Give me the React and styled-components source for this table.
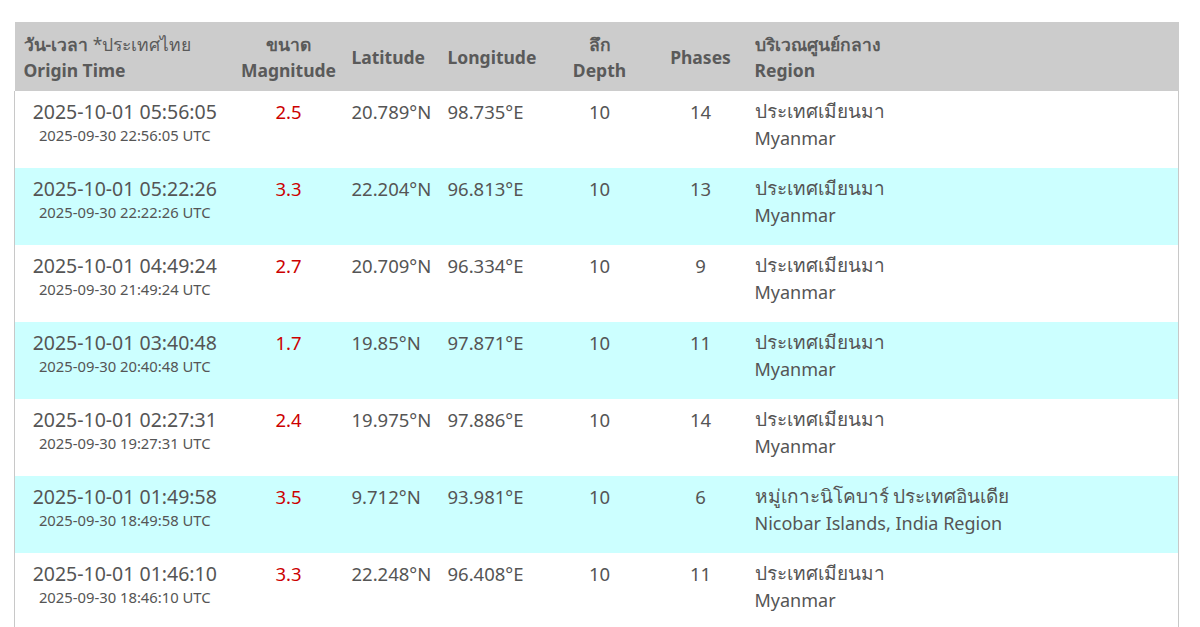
import React from "react";
import styled, { createGlobalStyle } from "styled-components";

const Global = createGlobalStyle`
  html, body { margin: 0; padding: 0; background: #fff; }
  body { font-family: "Noto Sans", "Open Sans", sans-serif; color: #555; }
`;

const Page = styled.div`
  padding: 22px 21px 0 14px;
`;

const Table = styled.table`
  width: 1165px;
  border-collapse: collapse;
  table-layout: fixed;
`;

const HeadRow = styled.tr`
  background: #cccccc;
  height: 69px;
`;

const Th = styled.th`
  font-weight: 700;
  font-size: 17.5px;
  line-height: 26px;
  color: #5a5a5a;
  text-align: ${(p) => p.$align || "left"};
  padding: ${(p) => (p.$align === "center" ? "0" : `0 9px 0 ${p.$pl ?? 9}px`)};
  vertical-align: middle;
  white-space: nowrap;
`;

const Light = styled.span`
  font-weight: 400;
`;

const Row = styled.tr`
  background: ${(p) => (p.$alt ? "#ccffff" : "#ffffff")};
  height: 77px;
  border-left: 1px solid #c8c8c8;
  border-right: 1px solid #c8c8c8;
`;

const Td = styled.td`
  vertical-align: top;
  padding: 8px 9px 0;
  font-size: 18.5px;
  line-height: 26px;
  color: ${(p) => (p.$red ? "#cc0000" : "#555")};
  text-align: ${(p) => p.$align || "left"};
  white-space: nowrap;
`;

const Main = styled.div`
  font-size: 19.5px;
  line-height: 26px;
`;

const Utc = styled.div`
  font-size: 14.8px;
  line-height: 20px;
`;

const RegionCell = styled.td`
  vertical-align: top;
  padding: 7px 9px 0 4px;
  font-size: 18px;
  line-height: 27px;
  color: #555;
  white-space: nowrap;
`;

const Thai = styled.span`
  font-size: 19px;
`;

const rows = [
  ["2025-10-01 05:56:05", "2025-09-30 22:56:05 UTC", "2.5", "20.789°N", "98.735°E", "10", "14", "ประเทศเมียนมา", "Myanmar"],
  ["2025-10-01 05:22:26", "2025-09-30 22:22:26 UTC", "3.3", "22.204°N", "96.813°E", "10", "13", "ประเทศเมียนมา", "Myanmar"],
  ["2025-10-01 04:49:24", "2025-09-30 21:49:24 UTC", "2.7", "20.709°N", "96.334°E", "10", "9", "ประเทศเมียนมา", "Myanmar"],
  ["2025-10-01 03:40:48", "2025-09-30 20:40:48 UTC", "1.7", "19.85°N", "97.871°E", "10", "11", "ประเทศเมียนมา", "Myanmar"],
  ["2025-10-01 02:27:31", "2025-09-30 19:27:31 UTC", "2.4", "19.975°N", "97.886°E", "10", "14", "ประเทศเมียนมา", "Myanmar"],
  ["2025-10-01 01:49:58", "2025-09-30 18:49:58 UTC", "3.5", "9.712°N", "93.981°E", "10", "6", "หมู่เกาะนิโคบาร์ ประเทศอินเดีย", "Nicobar Islands, India Region"],
  ["2025-10-01 01:46:10", "2025-09-30 18:46:10 UTC", "3.3", "22.248°N", "96.408°E", "10", "11", "ประเทศเมียนมา", "Myanmar"],
];

export default function App() {
  return (
    <Page>
      <Global />
      <Table>
        <colgroup>
          <col style={{ width: 220 }} />
          <col style={{ width: 108 }} />
          <col style={{ width: 96 }} />
          <col style={{ width: 110 }} />
          <col style={{ width: 102 }} />
          <col style={{ width: 100 }} />
          <col />
        </colgroup>
        <thead>
          <HeadRow>
            <Th>
              วัน-เวลา <Light>*ประเทศไทย</Light>
              <br />
              Origin Time
            </Th>
            <Th $align="center">
              ขนาด
              <br />
              Magnitude
            </Th>
            <Th>Latitude</Th>
            <Th>Longitude</Th>
            <Th $align="center">
              ลึก
              <br />
              Depth
            </Th>
            <Th $align="center">Phases</Th>
            <Th $pl={4}>
              บริเวณศูนย์กลาง
              <br />
              Region
            </Th>
          </HeadRow>
        </thead>
        <tbody>
          {rows.map((r, i) => (
            <Row key={i} $alt={i % 2 === 1}>
              <Td $align="center">
                <Main>{r[0]}</Main>
                <Utc>{r[1]}</Utc>
              </Td>
              <Td $align="center" $red>{r[2]}</Td>
              <Td>{r[3]}</Td>
              <Td>{r[4]}</Td>
              <Td $align="center">{r[5]}</Td>
              <Td $align="center">{r[6]}</Td>
              <RegionCell>
                <Thai>{r[7]}</Thai>
                <br />
                {r[8]}
              </RegionCell>
            </Row>
          ))}
        </tbody>
      </Table>
    </Page>
  );
}
